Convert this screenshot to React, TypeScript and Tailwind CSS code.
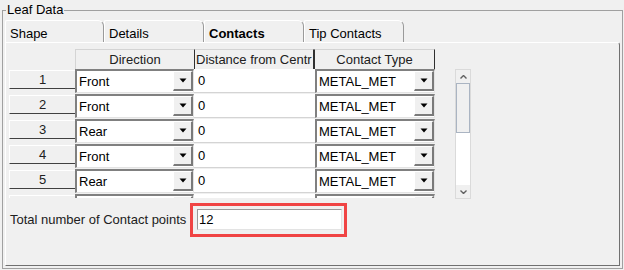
const directions = ['Front', 'Front', 'Rear', 'Front', 'Rear', ''];
const tabs = ['Shape', 'Details', 'Contacts', 'Tip Contacts'];

function DropArrow() {
  return (
    <button className="flex h-[20px] w-[20px] shrink-0 items-center justify-center border-l border-t border-b-2 border-r-2 border-l-white border-t-white border-b-[#7a7a7a] border-r-[#7a7a7a] bg-[#f0f0f0]">
      <svg width="8" height="5" viewBox="0 0 8 5">
        <polygon points="0.5,0.5 7.5,0.5 4,4.5" fill="#000" />
      </svg>
    </button>
  );
}

function Combo({ value, width }: { value: string; width: string }) {
  return (
    <div className={`flex h-[24px] ${width} border-l-2 border-t-2 border-b border-r border-l-[#808080] border-t-[#808080] border-b-[#e3e3e3] border-r-[#e3e3e3] bg-white`}>
      <span className="flex-1 overflow-hidden whitespace-nowrap pl-[2px] leading-[22px]">{value}</span>
      <DropArrow />
    </div>
  );
}

function Chevron({ up }: { up?: boolean }) {
  return (
    <svg width="7" height="4" viewBox="0 0 7 4">
      <polyline points={up ? '0.5,3.5 3.5,0.5 6.5,3.5' : '0.5,0.5 3.5,3.5 6.5,0.5'} fill="none" stroke="#606060" strokeWidth="1.4" />
    </svg>
  );
}

export default function App() {
  return (
    <div className="h-[270px] w-[624px] overflow-hidden bg-[#f0f0f0] pl-[2px] pt-[10px] text-[13px] text-black" style={{ fontFamily: '"Liberation Sans", Arial, sans-serif' }}>
      <div className="relative h-[259px] w-[621px] border border-[#a0a0a0] pl-[2px] pt-[9px]">
        <span className="absolute left-[3px] top-[-9px] bg-[#f0f0f0] px-[1px] leading-[16px]">Leaf Data</span>

        {/* tab strip */}
        <div className="flex h-[22px]">
          {tabs.map((t, i) => (
            <div key={t}
              className={`h-[22px] ${i === 0 ? 'w-[99px]' : 'w-[100px]'} rounded-tl-[2px] rounded-tr-[6px] border-l border-t border-r border-l-white border-t-white border-r-[#9a9a9a] pl-[4px] pt-[5px] leading-[15px] ${t === 'Contacts' ? 'font-bold' : ''}`}>
              {t}
            </div>
          ))}
        </div>

        {/* tab page */}
        <div className="h-[224px] w-[615px] rounded-tr-[3px] border-l border-t border-r border-b border-l-white border-t-white border-r-[#707070] border-b-[#707070] pl-[3px] pt-[6px]">
          <div className="flex">
            <div className="h-[149px] w-[426px] overflow-hidden">
              {/* header */}
              <div className="flex h-[20px]">
                <div className="w-[66px]" />
                <div className="w-[120px] border-l border-t border-r border-l-[#d4d4d4] border-t-[#d4d4d4] border-r-[#303030] text-center leading-[19px] text-[#202020]">Direction</div>
                <div className="w-[119px] overflow-hidden whitespace-nowrap border-t border-r border-t-[#d4d4d4] border-r-[#303030] pl-[1px] leading-[19px] text-[#202020]">Distance from Centr</div>
                <div className="w-[121px] border-l border-t border-r border-l-[#303030] border-t-[#d4d4d4] border-r-[#303030] text-center leading-[19px] text-[#202020]">Contact Type</div>
              </div>
              {directions.map((d, i) => (
                <div key={i} className="flex h-[25px]">
                  <div className="w-[66px]">
                    <div className="mt-[1px] h-[19px] border-l border-t border-b border-l-white border-t-white border-b-[#404040] bg-[#f0f0f0] text-center leading-[17px] text-[#202020]">{d ? i + 1 : ''}</div>
                  </div>
                  <Combo value={d} width="w-[119px]" />
                  <div className="h-[24px] w-[121px] border-b border-b-[#d4d4d4] bg-white pl-[4px] pt-[1px] leading-[22px]">{d ? '0' : ''}</div>
                  <Combo value={d ? 'METAL_MET' : ''} width="w-[120px]" />
                </div>
              ))}
            </div>

            {/* vertical scrollbar */}
            <div className="ml-[20px] mt-[20px] flex h-[130px] w-[16px] flex-col border border-[#dadada] bg-white">
              <div className="flex h-[13px] items-center justify-center bg-[#f0f0f0]"><Chevron up /></div>
              <div className="h-[50px] border border-[#aab4c2] bg-[#f0f0f0]" />
              <div className="flex-1" />
              <div className="flex h-[13px] items-center justify-center bg-[#f0f0f0]"><Chevron /></div>
            </div>
          </div>

          {/* total */}
          <div className="mt-[4px] flex items-center">
            <span className="w-[181px] pl-[1px] leading-[16px] text-[#202020]">Total number of Contact points</span>
            <div className="h-[34px] w-[157px] border-[3px] border-[#f04444] pl-[4px] pt-[3px]">
              <div className="h-[21px] w-[145px] border-l border-t border-b border-r border-l-[#9a9a9a] border-t-[#9a9a9a] border-b-[#e3e3e3] border-r-[#e3e3e3] bg-white pl-[1px] leading-[19px]">12</div>
            </div>
          </div>
        </div>
      </div>
    </div>
  );
}
